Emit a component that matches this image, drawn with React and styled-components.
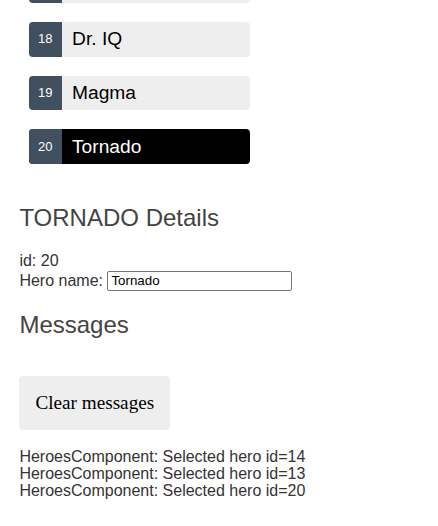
import React from "react";
import styled, { createGlobalStyle } from "styled-components";

const GlobalStyle = createGlobalStyle`
  html, body {
    margin: 0;
    padding: 0;
    background: #ffffff;
    overflow: hidden;
  }
  body {
    font-family: "Liberation Sans", Arial, sans-serif;
    font-size: 16px;
    color: #333;
  }
`;

const Page = styled.div`
  padding: 0 0 0 19.4px;
`;

const HeroList = styled.ul`
  margin: -41.36px 0 30.7px 0;
  padding: 0;
  list-style: none;
  width: 240px;
`;

const HeroItem = styled.li`
  display: flex;
`;

const HeroButton = styled.button`
  flex: 1;
  display: flex;
  align-items: stretch;
  box-sizing: border-box;
  height: 34.56px;
  margin: 9.6px;
  padding: 0;
  border: none;
  border-radius: 4px;
  background-color: ${(p) => (p.$selected ? "#000000" : "#eeeeee")};
  color: ${(p) => (p.$selected ? "#ffffff" : "#000000")};
  font-family: "Liberation Sans", Arial, sans-serif;
  font-size: 19.2px;
  text-align: left;
  cursor: pointer;
`;

const Badge = styled.span`
  display: inline-block;
  font-size: 13px;
  line-height: 13px;
  color: #ffffff;
  padding: 10.4px 9.1px 0 9.1px;
  background-color: #405061;
  margin-right: 10.4px;
  border-radius: 4px 0 0 4px;
`;

const Name = styled.span`
  align-self: center;
`;

const Heading = styled.h2`
  font-family: "Liberation Sans", Arial, sans-serif;
  font-size: 24px;
  font-weight: 400;
  color: #444;
  margin: ${(p) => (p.$spaced ? "19.92px" : "0")} 0 19.92px 0;
`;

const Line = styled.div`
  line-height: 18.4px;
`;

const NameInput = styled.input`
  box-sizing: border-box;
  width: 184.5px;
  height: 20.5px;
  padding: 1px 3px;
  border: 1px solid #767676;
  border-radius: 2px;
  font-family: "Liberation Sans", Arial, sans-serif;
  font-size: 13.33px;
  color: #000;
  vertical-align: baseline;
  outline: none;
`;

const ClearButton = styled.button`
  display: block;
  margin: 37.2px 0 19.3px 0;
  padding: 16px;
  border: none;
  border-radius: 4px;
  background-color: #eeeeee;
  color: #000;
  font-family: "Liberation Serif", "Times New Roman", serif;
  font-size: 19.2px;
  cursor: pointer;
`;

const Message = styled.div`
  line-height: 16.67px;
  color: #333;
`;

const heroes = [
  { id: 17, name: "Dynama" },
  { id: 18, name: "Dr. IQ" },
  { id: 19, name: "Magma" },
  { id: 20, name: "Tornado" },
];

const messages = [
  "HeroesComponent: Selected hero id=14",
  "HeroesComponent: Selected hero id=13",
  "HeroesComponent: Selected hero id=20",
];

export default function App() {
  const selected = 20;
  return (
    <>
      <GlobalStyle />
      <Page>
        <HeroList>
          {heroes.map((h) => (
            <HeroItem key={h.id}>
              <HeroButton type="button" $selected={h.id === selected}>
                <Badge>{h.id}</Badge>
                <Name>{h.name}</Name>
              </HeroButton>
            </HeroItem>
          ))}
        </HeroList>

        <Heading>TORNADO Details</Heading>
        <Line>id: 20</Line>
        <Line>
          <label htmlFor="hero-name">Hero name: </label>
          <NameInput id="hero-name" defaultValue="Tornado" placeholder="name" />
        </Line>

        <Heading $spaced>Messages</Heading>
        <ClearButton type="button">Clear messages</ClearButton>
        {messages.map((m, i) => (
          <Message key={i}>{m}</Message>
        ))}
      </Page>
    </>
  );
}
